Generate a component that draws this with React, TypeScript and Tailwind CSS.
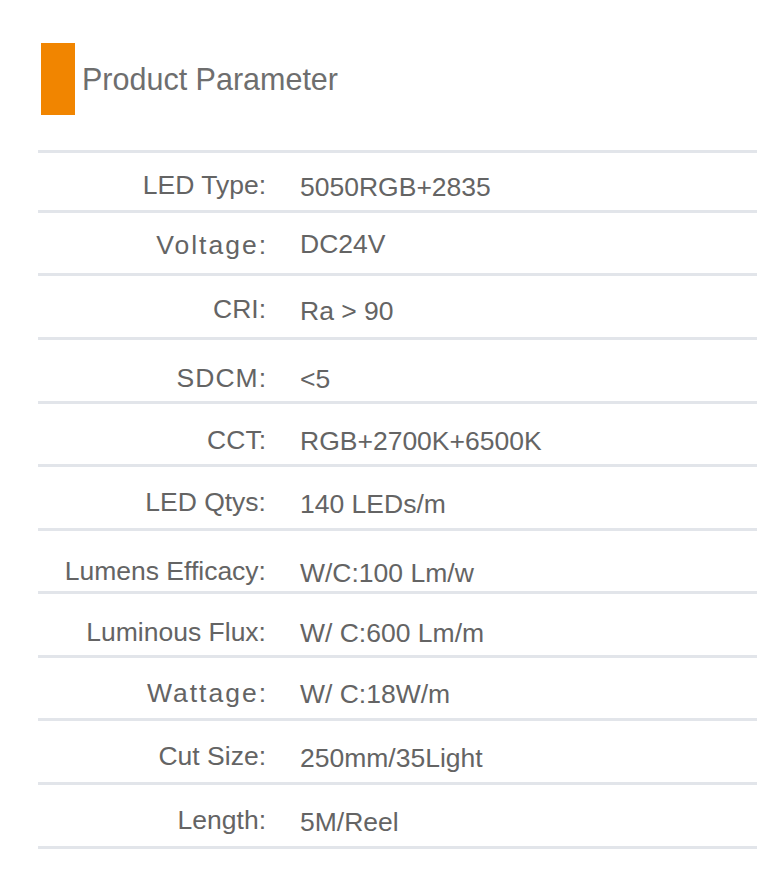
import React from "react";

type Row = { label: string; value: string; h: string; lc: string; ls: string; vc: string };

const rows: Row[] = [
  { label: "LED Type:", value: "5050RGB+2835", h: "h-[60px]", lc: "pt-[7px]", ls: "", vc: "pt-[11px]" },
  { label: "Voltage:", value: "DC24V", h: "h-[63px]", lc: "pt-[4px]", ls: "tracking-[2px] mr-[-2px]", vc: "pt-[2px]" },
  { label: "CRI:", value: "Ra > 90", h: "h-[64px]", lc: "pt-[5px]", ls: "", vc: "pt-[9px]" },
  { label: "SDCM:", value: "<5", h: "h-[64px]", lc: "pt-[15px]", ls: "tracking-[1px] mr-[-1px]", vc: "pt-[17px]" },
  { label: "CCT:", value: "RGB+2700K+6500K", h: "h-[63px]", lc: "pt-[13px]", ls: "", vc: "pt-[15px]" },
  { label: "LED Qtys:", value: "140 LEDs/m", h: "h-[64px]", lc: "pt-[9px]", ls: "", vc: "pt-[13px]" },
  { label: "Lumens Efficacy:", value: "W/C:100 Lm/w", h: "h-[63px]", lc: "pt-[20px]", ls: "", vc: "pt-[24px]" },
  { label: "Luminous Flux:", value: "W/ C:600 Lm/m", h: "h-[64px]", lc: "pt-[15px]", ls: "", vc: "pt-[17px]" },
  { label: "Wattage:", value: "W/ C:18W/m", h: "h-[63px]", lc: "pt-[10px]", ls: "tracking-[2px] mr-[-2px]", vc: "pt-[12px]" },
  { label: "Cut Size:", value: "250mm/35Light", h: "h-[64px]", lc: "pt-[9px]", ls: "", vc: "pt-[13px]" },
  { label: "Length:", value: "5M/Reel", h: "h-[64px]", lc: "pt-[9px]", ls: "", vc: "pt-[13px]" },
];

export default function App() {
  return (
    <div
      className="w-[757px] h-[873px] bg-white overflow-hidden"
      style={{ fontFamily: '"Liberation Sans", Arial, sans-serif' }}
    >
      <div className="pt-[43px] pl-[41px] flex items-center">
        <div className="w-[34px] h-[72px] bg-[#f18500]" />
        <div className="ml-[7px] text-[30.5px] leading-none text-[#6e6e6e]">Product Parameter</div>
      </div>
      <div className="mt-[35px] ml-[38px]">
        {rows.map((r, i) => (
          <div
            key={i}
            className={`${r.h} border-t-[3px] border-[#e2e5ea] flex items-center text-[26.5px] leading-none text-[#646464]`}
          >
            <div className={`w-[228px] shrink-0 text-right whitespace-nowrap ${r.lc}`}>
              <span className={`inline-block ${r.ls}`}>{r.label}</span>
            </div>
            <div className={`pl-[34px] whitespace-nowrap ${r.vc}`}>{r.value}</div>
          </div>
        ))}
        <div className="border-t-[3px] border-[#e2e5ea]" />
      </div>
    </div>
  );
}
